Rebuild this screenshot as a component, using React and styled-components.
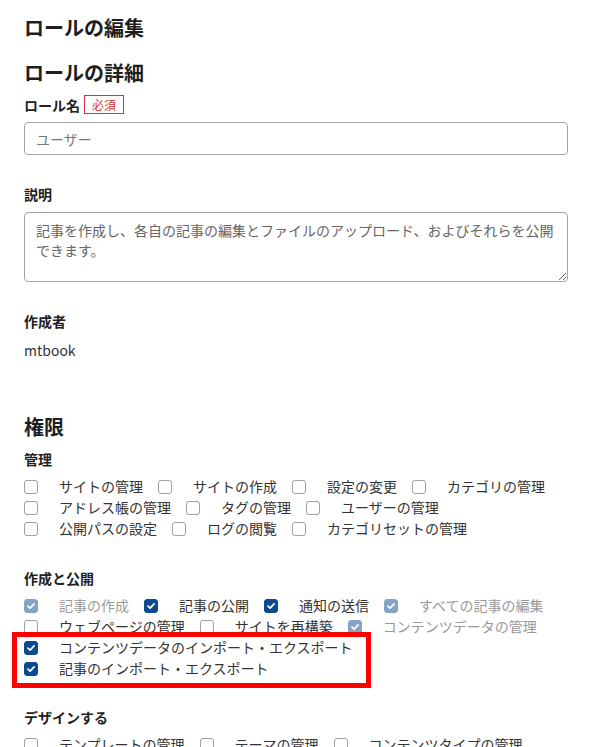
import React from "react";
import styled, { createGlobalStyle } from "styled-components";

const GlobalStyle = createGlobalStyle`
  body {
    margin: 0;
    background: #fff;
    font-family: "Noto Sans CJK JP", "Noto Sans", sans-serif;
    color: #333;
  }
`;

const Page = styled.div`
  width: 544px;
  padding: 14px 26px 40px 24px;
`;

const Title = styled.h1`
  margin: 0;
  font-size: 20px;
  line-height: 28px;
  font-weight: 700;
  color: #1e1e1e;
`;

const SectionTitle = styled.h2`
  margin: ${(props) => props.$top || 17}px 0 0;
  font-size: 20px;
  line-height: 28px;
  font-weight: 700;
  color: #1e1e1e;
`;

const LabelRow = styled.div`
  display: flex;
  align-items: center;
  margin-top: ${(props) => props.$top || 8}px;
  height: ${(props) => (props.$tall ? 19 : 20)}px;
`;

const FieldLabel = styled.span`
  font-size: 14px;
  line-height: 20px;
  font-weight: 700;
  color: #222;
`;

const Required = styled.span`
  margin-left: 4px;
  padding: 0 7px;
  border: 1px solid #d8343f;
  font-size: 12px;
  line-height: 17px;
  color: #d8343f;
`;

const TextInput = styled.input`
  display: block;
  box-sizing: border-box;
  width: 100%;
  height: 33px;
  margin-top: 8px;
  padding: 0 11px;
  border: 1px solid #a3a3a3;
  border-radius: 4px;
  font-family: inherit;
  font-size: 14px;
  color: #333;
  outline: none;

  &::placeholder {
    color: #777;
  }
`;

const TextArea = styled.textarea`
  display: block;
  box-sizing: border-box;
  width: 100%;
  height: 70px;
  margin-top: 8px;
  padding: 7px 4px 7px 11px;
  border: 1px solid #a3a3a3;
  border-radius: 4px;
  font-family: inherit;
  font-size: 14px;
  line-height: 20px;
  color: #666;
  outline: none;
`;

const Value = styled.div`
  margin-top: 9px;
  font-size: 14px;
  line-height: 20px;
  color: #333;
`;

const CheckList = styled.div`
  display: flex;
  flex-wrap: wrap;
  column-gap: 15px;
  margin-top: ${(props) => (props.$flush ? 0 : 7)}px;
`;

const Item = styled.label`
  display: flex;
  align-items: center;
  gap: 21px;
  height: 21px;
  font-size: 14px;
  line-height: 21px;
  color: #333;
  white-space: nowrap;
  opacity: ${(props) => (props.$disabled ? 0.5 : 1)};
`;

const Box = styled.span`
  display: flex;
  align-items: center;
  justify-content: center;
  box-sizing: border-box;
  width: 14px;
  height: 14px;
  border-radius: 3px;
  border: 1px solid ${(props) => (props.$checked ? "#0c4a8e" : "#a0a0a0")};
  background: ${(props) => (props.$checked ? "#0c4a8e" : "#fff")};
`;

const Highlight = styled.div`
  position: relative;

  &::after {
    content: "";
    position: absolute;
    top: -5px;
    left: -12px;
    width: 359px;
    bottom: -9px;
    box-sizing: border-box;
    border: 5px solid #ff0000;
    pointer-events: none;
  }
`;

const Check = ({ label, checked, disabled }) => (
  <Item $disabled={disabled}>
    <Box $checked={checked}>
      {checked && (
        <svg width="10" height="10" viewBox="0 0 10 10">
          <path
            d="M2 5.2 L4.1 7.2 L8.1 2.9"
            fill="none"
            stroke="#fff"
            strokeWidth="1.7"
            strokeLinecap="round"
            strokeLinejoin="round"
          />
        </svg>
      )}
    </Box>
    {label}
  </Item>
);

const manage = [
  "サイトの管理",
  "サイトの作成",
  "設定の変更",
  "カテゴリの管理",
  "アドレス帳の管理",
  "タグの管理",
  "ユーザーの管理",
  "公開パスの設定",
  "ログの閲覧",
  "カテゴリセットの管理",
];

const publish = [
  { label: "記事の作成", checked: true, disabled: true },
  { label: "記事の公開", checked: true },
  { label: "通知の送信", checked: true },
  { label: "すべての記事の編集", checked: true, disabled: true },
  { label: "ウェブページの管理" },
  { label: "サイトを再構築" },
  { label: "コンテンツデータの管理", checked: true, disabled: true },
];

const imports = [
  "コンテンツデータのインポート・エクスポート",
  "記事のインポート・エクスポート",
];

const design = ["テンプレートの管理", "テーマの管理", "コンテンツタイプの管理"];

export default function App() {
  return (
    <>
      <GlobalStyle />
      <Page>
        <Title>ロールの編集</Title>
        <SectionTitle>ロールの詳細</SectionTitle>

        <LabelRow $tall>
          <FieldLabel>ロール名</FieldLabel>
          <Required>必須</Required>
        </LabelRow>
        <TextInput placeholder="ユーザー" />

        <LabelRow $top={29}>
          <FieldLabel>説明</FieldLabel>
        </LabelRow>
        <TextArea defaultValue="記事を作成し、各自の記事の編集とファイルのアップロード、およびそれらを公開できます。" />

        <LabelRow $top={29}>
          <FieldLabel>作成者</FieldLabel>
        </LabelRow>
        <Value>mtbook</Value>

        <SectionTitle $top={53}>権限</SectionTitle>

        <LabelRow>
          <FieldLabel>管理</FieldLabel>
        </LabelRow>
        <CheckList>
          {manage.map((label) => (
            <Check key={label} label={label} />
          ))}
        </CheckList>

        <LabelRow $top={29}>
          <FieldLabel>作成と公開</FieldLabel>
        </LabelRow>
        <CheckList>
          {publish.map((p) => (
            <Check key={p.label} {...p} />
          ))}
        </CheckList>
        <Highlight>
          <CheckList $flush>
            {imports.map((label) => (
              <Check key={label} label={label} checked />
            ))}
          </CheckList>
        </Highlight>

        <LabelRow $top={28}>
          <FieldLabel>デザインする</FieldLabel>
        </LabelRow>
        <CheckList>
          {design.map((label) => (
            <Check key={label} label={label} />
          ))}
        </CheckList>
      </Page>
    </>
  );
}
